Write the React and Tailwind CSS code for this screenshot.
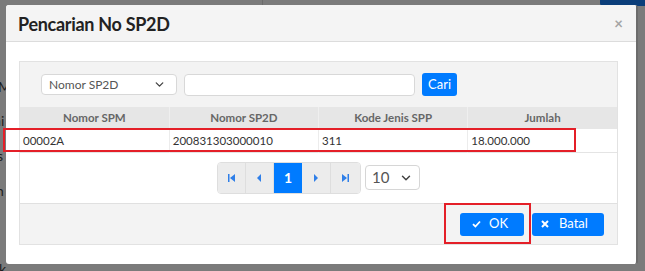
import { ChevronDown } from 'lucide-react';

const font = { fontFamily: 'Lato, "Open Sans", "Liberation Sans", sans-serif' };

function PagerIcon({ type }) {
  // small blue triangle glyphs used by the pager
  const paths = {
    first: 'M1 1h1.5v8H1z M8 1v8L3 5z',
    prev: 'M6 1v8L2 5z',
    next: 'M2 1v8l4-4z',
    last: 'M1 1v8l5-4z M6.5 1H8v8H6.5z',
  };
  return (
    <svg width="9" height="10" viewBox="0 0 9 10">
      <path d={paths[type]} fill="#2f7fe8" />
    </svg>
  );
}

function Pager() {
  return (
    <div className="flex items-center gap-[4px]">
      <div className="flex h-[32px] rounded-[4px] border border-[#dedede] overflow-hidden">
        <button className="w-[28px] flex items-center justify-center bg-[#ececec] border-r border-[#dedede]">
          <PagerIcon type="first" />
        </button>
        <button className="w-[28px] flex items-center justify-center bg-[#ececec] border-r border-[#dedede]">
          <PagerIcon type="prev" />
        </button>
        <button className="w-[28px] flex items-center justify-center bg-[#007bff] text-white text-[14px] font-bold">
          1
        </button>
        <button className="w-[29px] flex items-center justify-center bg-[#ececec] border-r border-[#dedede]">
          <PagerIcon type="next" />
        </button>
        <button className="w-[29px] flex items-center justify-center bg-[#ececec]">
          <PagerIcon type="last" />
        </button>
      </div>
      <div className="flex h-[25px] w-[55px] items-center rounded-[4px] border border-[#d6d6d6] bg-white">
        <span className="flex-1 pl-[6px] text-[15px] text-[#555]">10</span>
        <ChevronDown size={14} strokeWidth={2.5} className="mr-[6px] text-[#444]" />
      </div>
    </div>
  );
}

export default function App() {
  const cols = ['Nomor SPM', 'Nomor SP2D', 'Kode Jenis SPP', 'Jumlah'];
  const row = ['00002A', '200831303000010', '311', '18.000.000'];

  return (
    <div className="relative w-[645px] h-[271px] overflow-hidden bg-[#7b7b7b]" style={font}>
      {/* page behind the overlay */}
      <div className="absolute left-0 top-0 h-full w-[8px] text-[14px] text-[#1e1e1e]">
        <div className="absolute top-[76px] -left-[2px]">M</div>
        <div className="absolute top-[110px] -left-[6px]">ai</div>
        <div className="absolute top-[145px] -left-[3px]">s</div>
        <div className="absolute top-[180px] -left-[4px]">n</div>
        <div className="absolute top-[258px] -left-[1px]">k</div>
      </div>
      <div className="absolute left-[262px] top-0 h-[6px] w-px bg-[#6b6b6b]" />
      <div className="absolute left-[600px] -top-[8px] h-[14px] w-[48px] rounded-[3px] bg-[#0b3e7a]" />

      {/* modal */}
      <div className="absolute left-[6px] top-[5px] w-[632px] h-[259px] bg-white rounded-[3px] flex flex-col overflow-hidden border-r-[2px] border-[#6c6c6c]">
        <div className="h-[37px] shrink-0 bg-[#f4f4f4] border-b border-[#dcdcdc] flex items-center justify-between pl-[12px] pr-[13px]">
          <span className="pt-[3px] text-[18px] font-bold text-[#222] tracking-[-0.3px]">Pencarian No SP2D</span>
          <span className="text-[15px] font-bold text-[#a4a4a4] leading-none">×</span>
        </div>

        <div className="flex-1 pl-[13px] pr-[18px] pt-[19px]">
          <div className="border border-[#e2e2e2] flex flex-col">
            <div className="bg-[#f3f3f3] h-[45px] flex items-center gap-[7px] pl-[21px]">
              <div className="flex h-[21px] w-[136px] items-center rounded-[4px] border border-[#d8d8d8] bg-white">
                <span className="flex-1 pl-[7px] text-[12px] text-[#555]">Nomor SP2D</span>
                <ChevronDown size={13} strokeWidth={2.5} className="mr-[10px] text-[#444]" />
              </div>
              <div className="h-[22px] w-[231px] rounded-[4px] border border-[#d8d8d8] bg-white" />
              <button className="h-[23px] w-[35px] rounded-[3px] bg-[#007bff] text-white text-[13px]">Cari</button>
            </div>

            <table className="w-full table-fixed border-collapse text-[11.5px]">
              <thead>
                <tr className="bg-[#e6e6e6] h-[22px]">
                  {cols.map(c => (
                    <th key={c} className="font-bold text-[#666] text-center border-l border-[#efefef] first:border-l-0">
                      {c}
                    </th>
                  ))}
                </tr>
              </thead>
              <tbody>
                <tr className="h-[23px] bg-white border-b border-[#e4e4e4]">
                  {row.map((v, i) => (
                    <td key={i} className="pl-[3px] text-[#333] border-l border-[#ececec] first:border-l-0">
                      {v}
                    </td>
                  ))}
                </tr>
              </tbody>
            </table>

            <div className="h-[50px] bg-white flex items-center justify-center">
              <Pager />
            </div>

            <div className="h-[41px] bg-[#f3f3f3] border-t border-[#e0e0e0] flex items-center justify-end gap-[8px] pr-[13px] pt-[1px]">
              <button className="h-[23px] w-[64px] rounded-[3px] bg-[#007bff] text-white text-[13px] flex items-center pl-[12px] gap-[8px]">
                <svg width="9" height="8" viewBox="0 0 9 8">
                  <path d="M1 4.2l2.4 2.3L8 1.5" stroke="white" strokeWidth="1.8" fill="none" />
                </svg>
                OK
              </button>
              <button className="h-[23px] w-[72px] rounded-[3px] bg-[#007bff] text-white text-[13px] flex items-center pl-[9px] gap-[10px]">
                <svg width="8" height="8" viewBox="0 0 8 8">
                  <path d="M1 1l6 6M7 1L1 7" stroke="white" strokeWidth="2" />
                </svg>
                Batal
              </button>
            </div>
          </div>
        </div>
      </div>

      {/* red highlight annotations */}
      <div className="absolute left-[3px] top-[128px] w-[573px] h-[24px] border-2 border-[#e41f28]" />
      <div className="absolute left-[444px] top-[203px] w-[87px] h-[41px] border-2 border-[#e41f28]" />
    </div>
  );
}
